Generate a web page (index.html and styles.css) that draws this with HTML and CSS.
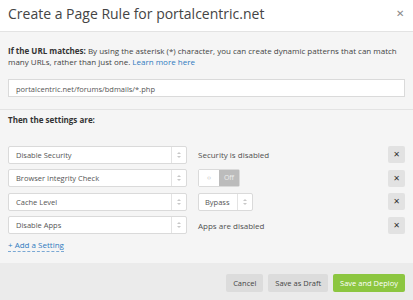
FILE: index.html
```
<html>
<head>
    <title>Create a Page Rule</title>
    <link rel="stylesheet" href="styles.css">
</head>
<body>
<div class="modal">
    <div class="head">
        <span class="title">Create a Page Rule for portalcentric.net</span>
        <span class="close">&#x2715;</span>
    </div>
    <div class="match">
        <p><b>If the URL matches:</b> <span>By using the asterisk (*) character, you can create dynamic patterns that can match</span><br><span>many URLs, rather than just one.</span> <a href="#">Learn more here</a></p>
        <div class="url">portalcentric.net/forums/bdmails/*.php</div>
    </div>
    <div class="settings">
        <p><b>Then the settings are:</b></p>
        <div class="rows">
            <div class="row">
                <div class="select wide"><span>Disable Security</span><i></i></div>
                <div class="value">Security is disabled</div>
                <button class="remove">&#x2715;</button>
            </div>
            <div class="row">
                <div class="select wide"><span>Browser Integrity Check</span><i></i></div>
                <div class="value">
                    <div class="toggle"><span class="knob">&lsaquo;&rsaquo;</span><span class="off">Off</span></div>
                </div>
                <button class="remove">&#x2715;</button>
            </div>
            <div class="row">
                <div class="select wide"><span>Cache Level</span><i></i></div>
                <div class="value">
                    <div class="select small"><span>Bypass</span><i></i></div>
                </div>
                <button class="remove">&#x2715;</button>
            </div>
            <div class="row">
                <div class="select wide"><span>Disable Apps</span><i></i></div>
                <div class="value">Apps are disabled</div>
                <button class="remove">&#x2715;</button>
            </div>
        </div>
        <a href="#" class="add">+ Add a Setting</a>
    </div>
    <div class="foot">
        <button class="btn">Cancel</button>
        <button class="btn">Save as Draft</button>
        <button class="btn green">Save and Deploy</button>
    </div>
</div>
</body>
</html>
```

FILE: styles.css
```
body {
    margin: 0;
    font-family: 'Open Sans', sans-serif;
    color: #404040;
}
.modal {
    width: 413px;
    height: 300px;
    display: flex;
    flex-direction: column;
    background-color: #f5f5f5;
}
.head {
    height: 32px;
    background-color: #fff;
    border-bottom: 1px solid #e3e3e3;
    display: flex;
    align-items: center;
    justify-content: space-between;
    padding: 0 9px 5px 8px;
    box-sizing: border-box;
}
.title {
    font-size: 14px;
    color: #444;
}
.close {
    font-size: 10px;
    color: #888;
}
p {
    margin: 0;
    font-size: 8px;
    line-height: 11.5px;
    color: #444;
    white-space: nowrap;
}
b {
    color: #333;
}
a {
    color: #2f7bbf;
    text-decoration: none;
}
.match {
    padding: 12.5px 8px 12px;
    border-bottom: 1px solid #e3e3e3;
}
.url {
    margin-top: 11.5px;
    height: 18px;
    line-height: 18px;
    background-color: #fff;
    border: 1px solid #dadada;
    box-sizing: border-box;
    padding: 0 7px;
    font-size: 7.5px;
    color: #555;
}
.settings {
    flex: 1;
    padding: 4px 8px 0;
}
.rows {
    margin-top: 20px;
    display: flex;
    flex-direction: column;
    gap: 5.67px;
}
.row {
    display: flex;
    align-items: center;
    height: 18px;
}
.select {
    height: 18px;
    display: flex;
    background-color: #fff;
    border: 1px solid #dadada;
    border-radius: 2px;
    box-sizing: border-box;
    font-size: 7.5px;
    color: #555;
}
.select span {
    flex: 1;
    line-height: 16px;
    padding-left: 7px;
}
.select i {
    width: 14px;
    border-left: 1px solid #e3e3e3;
    position: relative;
}
.select i:before, .select i:after {
    content: '';
    position: absolute;
    left: 5px;
    border-left: 2px solid transparent;
    border-right: 2px solid transparent;
}
.select i:before {
    top: 5px;
    border-bottom: 2px solid #c8c8c8;
}
.select i:after {
    top: 9px;
    border-top: 2px solid #c8c8c8;
}
.wide {
    width: 179px;
}
.small {
    width: 55px;
}
.small span {
    padding-left: 6px;
}
.value {
    flex: 1;
    margin-left: 11px;
    font-size: 8px;
    color: #505050;
}
.toggle {
    width: 42px;
    height: 18px;
    display: flex;
    border: 1px solid #dadada;
    border-radius: 2px;
    box-sizing: border-box;
    font-size: 7px;
    line-height: 16px;
    text-align: center;
}
.knob {
    width: 20px;
    background-color: #fff;
    color: #c4c4c4;
}
.off {
    flex: 1;
    background-color: #bcbcbc;
    color: #eee;
}
.remove {
    width: 17px;
    height: 17px;
    padding: 0;
    border: 0;
    border-radius: 2px;
    background-color: #e2e2e2;
    color: #333;
    font-size: 8px;
    font-weight: bold;
    font-family: 'DejaVu Sans', sans-serif;
}
.add {
    display: inline-block;
    margin-top: 5px;
    font-size: 8px;
    line-height: 12px;
    border-bottom: 1px dashed #7aa8d4;
}
.foot {
    height: 37px;
    background-color: #ebebeb;
    display: flex;
    justify-content: flex-end;
    align-items: center;
    gap: 5px;
    padding: 2px 8px 0 0;
    box-sizing: border-box;
}
.btn {
    height: 18px;
    padding: 0 7px;
    border: 0;
    border-radius: 2px;
    background-color: #dcdcdc;
    color: #444;
    font-family: 'Open Sans', sans-serif;
    font-size: 7.5px;
}
.green {
    background-color: #8cc640;
    color: #fff;
    padding: 0 7px;
}
```
